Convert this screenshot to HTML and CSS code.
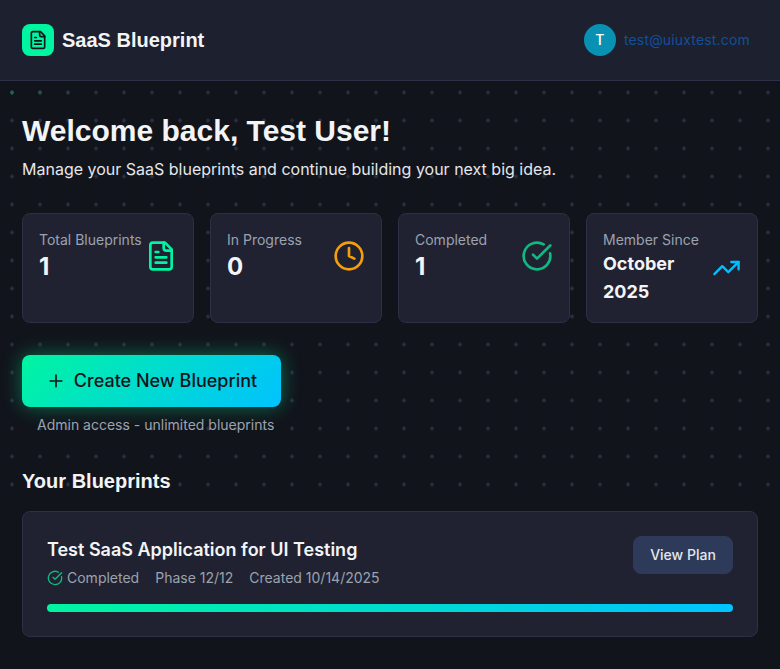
FILE: index.html
```html
<!DOCTYPE html>
<html lang="en">
<head>
<meta charset="utf-8">
<title>SaaS Blueprint</title>
<link rel="stylesheet" href="styles.css">
</head>
<body>
<svg class="defs" aria-hidden="true">
  <symbol id="file" viewBox="0 0 24 24"><path d="M15 2H6a2 2 0 0 0-2 2v16a2 2 0 0 0 2 2h12a2 2 0 0 0 2-2V7Z"/><path d="M14 2v4a2 2 0 0 0 2 2h4M10 9H8M16 13H8M16 17H8"/></symbol>
  <symbol id="check" viewBox="0 0 24 24"><path d="M21.801 10A10 10 0 1 1 17 3.335"/><path d="m9 11 3 3L22 4"/></symbol>
</svg>
<header class="topbar">
  <div class="brand">
    <span class="logo"><svg class="icon"><use href="#file"/></svg></span>
    <span class="brand-name">SaaS Blueprint</span>
  </div>
  <div class="user"><span class="avatar">T</span><span class="email">test@uiuxtest.com</span></div>
</header>
<main>
  <h1>Welcome back, Test User!</h1>
  <p class="intro">Manage your SaaS blueprints and continue building your next big idea.</p>
  <section class="stats">
    <div class="card stat"><div class="stat-body"><div><p class="label">Total Blueprints</p><p class="value">1</p></div><svg class="icon green"><use href="#file"/></svg></div></div>
    <div class="card stat"><div class="stat-body"><div><p class="label">In Progress</p><p class="value">0</p></div><svg class="icon amber" viewBox="0 0 24 24"><circle cx="12" cy="12" r="10"/><path d="M12 6v6l4 2"/></svg></div></div>
    <div class="card stat"><div class="stat-body"><div><p class="label">Completed</p><p class="value">1</p></div><svg class="icon emerald"><use href="#check"/></svg></div></div>
    <div class="card stat"><div class="stat-body"><div><p class="label">Member Since</p><p class="value date">October 2025</p></div><svg class="icon blue" viewBox="0 0 24 24"><path d="M22 7l-8.500 8.500-5-5L2 17"/><path d="M16 7h6v6"/></svg></div></div>
  </section>
  <section class="create">
    <button class="primary"><svg class="icon" viewBox="0 0 24 24"><path d="M5 12h14M12 5v14"/></svg>Create New Blueprint</button>
    <p class="note">Admin access - unlimited blueprints</p>
  </section>
  <h2>Your Blueprints</h2>
  <article class="card blueprint">
    <div class="blueprint-head">
      <div>
        <h3>Test SaaS Application for UI Testing</h3>
        <div class="meta"><span class="status"><svg class="icon emerald"><use href="#check"/></svg>Completed</span><span>Phase 12/12</span><span>Created 10/14/2025</span></div>
      </div>
      <button class="secondary">View Plan</button>
    </div>
    <div class="track"><div class="fill" style="width:100%"></div></div>
  </article>
</main>
</body>
</html>
```
FILE: styles.css
```css
* { box-sizing: border-box; }
body {
  margin: 0;
  min-height: 669px;
  color: #f3f4f6;
  font-family: Inter, sans-serif;
  font-size: 16px;
  line-height: 24px;
  background: #11141b;
}
/* Dot grid behind the upper part of the page */
body::before {
  content: "";
  position: absolute;
  z-index: -1;
  inset: 0 0 auto;
  height: 500px;
  background: radial-gradient(circle, #2b2d43 1.500px, transparent 2px) -2px -5.500px / 28px 28px;
}
/* Green tint on the first dots */
body::after {
  content: "";
  position: absolute;
  z-index: -1;
  left: 0;
  top: 81px;
  width: 84px;
  height: 24px;
  background: radial-gradient(circle, #1e6659 1.500px, transparent 2px) -2px -2.500px / 28px 28px;
  -webkit-mask-image: linear-gradient(90deg, #000 30%, transparent);
  mask-image: linear-gradient(90deg, #000 30%, transparent);
}
h1, h2, h3, p { margin: 0; }
button { font: inherit; }
.defs { position: absolute; width: 0; height: 0; }
.icon {
  flex: none;
  fill: none;
  stroke: currentColor;
  stroke-width: 2;
  stroke-linecap: round;
  stroke-linejoin: round;
}
.topbar {
  display: flex;
  justify-content: space-between;
  align-items: center;
  height: 81px;
  padding: 0 30px 0 22px;
  background: #1d202e;
  border-bottom: 1px solid #2d3148;
}
.brand, .user { display: flex; align-items: center; gap: 8px; }
.logo {
  display: grid;
  place-items: center;
  width: 32px;
  height: 32px;
  border-radius: 8px;
  background: #00f5a0;
  color: #11141b;
}
.logo .icon { width: 20px; height: 20px; }
.brand-name { font: bold 20px/28px "Liberation Sans", sans-serif; }
.avatar {
  display: grid;
  place-items: center;
  width: 32px;
  height: 32px;
  border-radius: 50%;
  background: #0891b2;
  color: #fff;
  font-size: 14px;
  font-weight: 500;
}
.email { color: #124f9b; font-size: 14px; letter-spacing: .17px; }
main { padding: 32px 22px; }
h1 { font: bold 30px/36px "Liberation Sans", sans-serif; }
.intro { margin-top: 8px; color: #e5e7eb; }
.stats {
  display: grid;
  grid-template-columns: repeat(4, 1fr);
  gap: 16px;
  margin-top: 32px;
}
.card { background: #202232; border: 1px solid #2d3045; border-radius: 8px; }
.stat { height: 110px; padding: 16px; }
.stat-body { display: flex; align-items: center; justify-content: space-between; }
.stat .icon { width: 32px; height: 32px; }
.stat .blue { width: 29px; }
.label { color: #9ca3af; font-size: 14px; line-height: 20px; white-space: nowrap; }
.value { padding-top: 1px; margin-bottom: -1px; font-size: 24px; font-weight: 700; line-height: 32px; }
.date { padding: 0; margin: 0; font-size: 18px; line-height: 28px; }
.green { color: #00f5a0; }
.amber { color: #f59e0b; }
.emerald { color: #10b981; }
.blue { color: #00bfff; }
.create { width: 259px; margin-top: 32px; }
.primary {
  display: flex;
  align-items: center;
  justify-content: center;
  gap: 8px;
  width: 259px;
  height: 52px;
  padding: 0;
  border: 0;
  border-radius: 8px;
  color: #11141b;
  background: linear-gradient(135deg, #00f5a0, #00c2ff);
  box-shadow: 0 0 20px rgba(0, 245, 160, .4);
  font-size: 18px;
  font-weight: 500;
}
.primary .icon { width: 20px; height: 20px; }
.note { margin: 8px 0 0 15px; color: #9ca3af; font-size: 14px; line-height: 20px; white-space: nowrap; }
h2 { margin: 32px 0 16px; font: bold 20px/28px "Liberation Sans", sans-serif; }
.blueprint { height: 126px; padding: 24px; }
.blueprint-head { display: flex; justify-content: space-between; align-items: flex-start; }
h3 { font-size: 18px; font-weight: 600; line-height: 28px; }
.meta { display: flex; gap: 16px; margin-top: 4px; color: #9ca3af; font-size: 14px; line-height: 20px; }
.status { display: flex; align-items: center; gap: 4px; }
.status .icon { width: 16px; height: 16px; }
.secondary {
  width: 100px;
  height: 38px;
  padding: 0;
  border: 1px solid #2f3a55;
  border-radius: 8px;
  color: #e5e7eb;
  background: #2d3a5a;
  font-size: 14px;
  font-weight: 500;
}
.track { height: 8px; margin-top: 16px; overflow: hidden; border-radius: 4px; background: #2d3148; }
.fill { height: 100%; background: linear-gradient(90deg, #00f5a0, #00c2ff); }
```
